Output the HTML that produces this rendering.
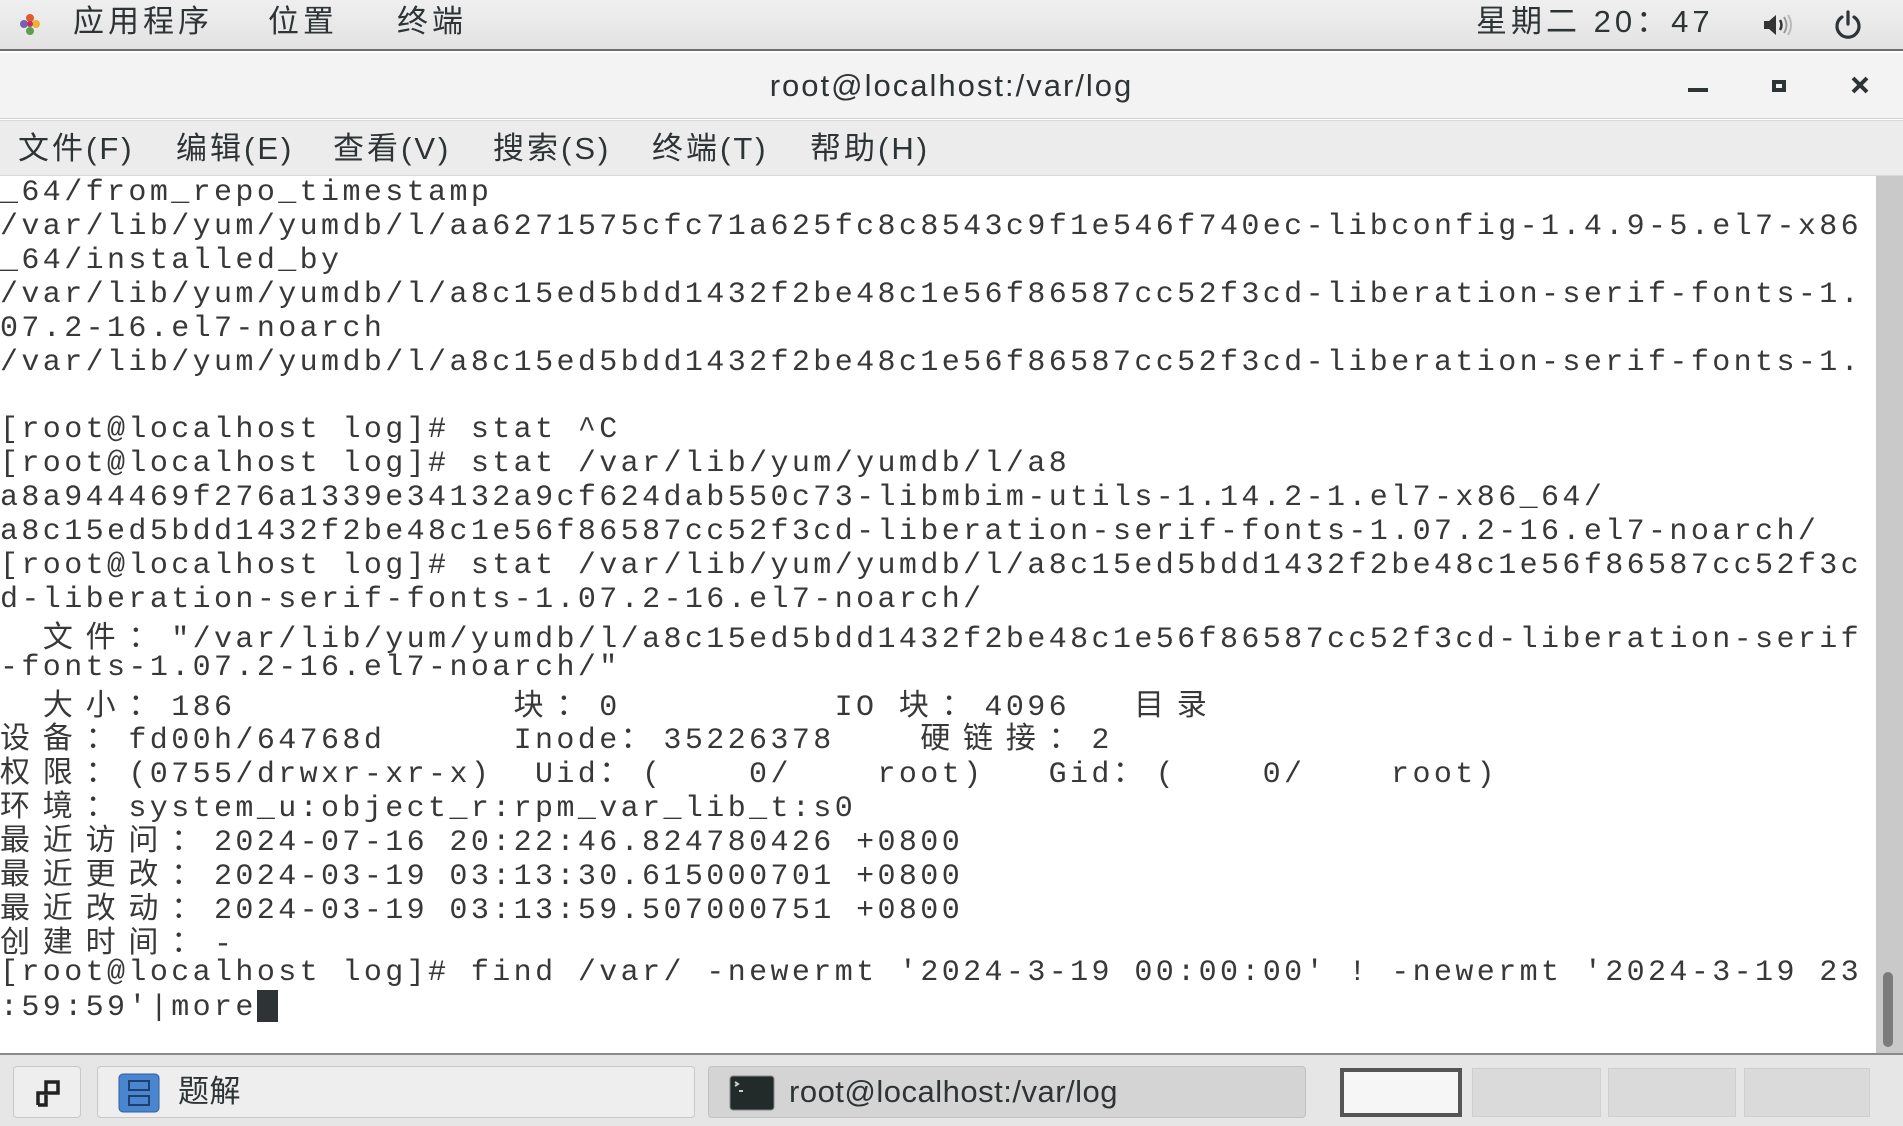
<!DOCTYPE html>
<html><head><meta charset="utf-8"><style>
*{margin:0;padding:0;box-sizing:border-box}
body{width:1903px;height:1126px;overflow:hidden;background:#fff;font-family:"Liberation Sans","Noto Sans CJK SC",sans-serif;color:#2e3436;position:relative}
#top{position:absolute;left:0;top:0;width:1903px;height:51px;background:linear-gradient(#efefef,#e3e3e3);border-bottom:2px solid #6d6d6d}
#top span{position:absolute;top:3px;font-size:31px;line-height:37px;letter-spacing:4px;color:#2e3436}
#title{position:absolute;left:0;top:53px;width:1903px;height:66px;background:#f3f3f3;border-bottom:1px solid #cfcfcf}
#title .t{position:absolute;left:0;width:1903px;text-align:center;top:14px;font-size:31px;line-height:37px;letter-spacing:2px;color:#2e3436}
#menu{position:absolute;left:0;top:120px;width:1903px;height:56px;background:#ececec;border-top:1px solid #d8d8d8;border-bottom:1px solid #d8d8d8}
#menu span{position:absolute;top:9px;font-size:31px;line-height:37px;letter-spacing:3px;color:#2e3436}
#term{position:absolute;left:0;top:176px;width:1876px;height:877px;background:#fff;overflow:hidden}
.l{position:absolute;left:0;height:34px;line-height:34px;white-space:pre;font-family:"Liberation Mono","Noto Sans CJK SC",monospace;font-size:30px;letter-spacing:3.4px;color:#383838}
.l span{position:absolute;top:0}
.k{letter-spacing:12.8px;font-family:"Noto Sans CJK SC",sans-serif;font-weight:normal}
#sb{position:absolute;left:1876px;top:176px;width:27px;height:877px;background:#c9c9c9}
#thumb{position:absolute;left:1883px;top:972px;width:10px;height:75px;background:#7b7b7b;border-radius:5px}
#task{position:absolute;left:0;top:1053px;width:1903px;height:73px;background:#e6e6e6;border-top:2px solid #8a8a8a}
.b{position:absolute;top:1066px;height:52px;border:1px solid #c8c8c8;border-radius:4px;background:#eeeeee}
.b span{position:absolute;left:80px;top:6px;font-size:31px;line-height:37px;letter-spacing:0.5px}
.ws{position:absolute;top:1068px;height:49px;background:#dadada;border:1px solid #cfcfcf}
</style></head><body>
<div id="top">
<svg style="position:absolute;left:18px;top:12px" width="24" height="26" viewBox="0 0 24 26"><circle cx="12" cy="6" r="4" fill="#e05a2a"/><circle cx="6" cy="12" r="4" fill="#7a5fb0"/><circle cx="18" cy="12" r="4" fill="#f0b030"/><circle cx="12" cy="19" r="4" fill="#5aa04a"/><circle cx="12" cy="12" r="3" fill="#c03070"/></svg>
<span style="left:73px">应用程序</span><span style="left:268px">位置</span><span style="left:397px">终端</span>
<span style="left:1476px">星期二 20：47</span>
<svg style="position:absolute;left:1762px;top:12px" width="34" height="26" viewBox="0 0 34 26"><path d="M2 9h5l7-6v20l-7-6H2z" fill="#333"/><path d="M18 8q3 5 0 10" stroke="#333" stroke-width="2.5" fill="none"/><path d="M22 5q5 8 0 16" stroke="#999" stroke-width="2" fill="none"/><path d="M26 3q6 10 0 20" stroke="#bbb" stroke-width="2" fill="none"/></svg>
<svg style="position:absolute;left:1832px;top:9px" width="32" height="32" viewBox="0 0 32 32"><path d="M10 8a11 11 0 1 0 12 0" stroke="#2e3436" stroke-width="3.2" fill="none" stroke-linecap="round"/><path d="M16 3v12" stroke="#2e3436" stroke-width="3.2" stroke-linecap="round"/></svg>
</div>
<div id="title"><div class="t">root@localhost:/var/log</div>
<div style="position:absolute;left:1688px;top:35px;width:20px;height:4px;background:#2e3436"></div>
<div style="position:absolute;left:1772px;top:27px;width:14px;height:12px;border:4px solid #2e3436"></div>
<svg style="position:absolute;left:1850px;top:22px" width="20" height="20" viewBox="0 0 20 20"><path d="M3 3l14 14M17 3L3 17" stroke="#2e3436" stroke-width="4"/></svg>
</div>
<div id="menu"><span style="left:18px">文件(F)</span><span style="left:176px">编辑(E)</span><span style="left:333px">查看(V)</span><span style="left:493px">搜索(S)</span><span style="left:652px">终端(T)</span><span style="left:810px">帮助(H)</span></div>
<div id="term">
<div class="l" style="top:0px">_64/from_repo_timestamp</div>
<div class="l" style="top:33.9px">/var/lib/yum/yumdb/l/aa6271575cfc71a625fc8c8543c9f1e546f740ec-libconfig-1.4.9-5.el7-x86</div>
<div class="l" style="top:67.8px">_64/installed_by</div>
<div class="l" style="top:101.7px">/var/lib/yum/yumdb/l/a8c15ed5bdd1432f2be48c1e56f86587cc52f3cd-liberation-serif-fonts-1.</div>
<div class="l" style="top:135.6px">07.2-16.el7-noarch</div>
<div class="l" style="top:169.5px">/var/lib/yum/yumdb/l/a8c15ed5bdd1432f2be48c1e56f86587cc52f3cd-liberation-serif-fonts-1.</div>
<div class="l" style="top:237.3px">[root@localhost log]# stat ^C</div>
<div class="l" style="top:271.2px">[root@localhost log]# stat /var/lib/yum/yumdb/l/a8</div>
<div class="l" style="top:305.1px">a8a944469f276a1339e34132a9cf624dab550c73-libmbim-utils-1.14.2-1.el7-x86_64/</div>
<div class="l" style="top:339px">a8c15ed5bdd1432f2be48c1e56f86587cc52f3cd-liberation-serif-fonts-1.07.2-16.el7-noarch/</div>
<div class="l" style="top:372.9px">[root@localhost log]# stat /var/lib/yum/yumdb/l/a8c15ed5bdd1432f2be48c1e56f86587cc52f3c</div>
<div class="l" style="top:406.8px">d-liberation-serif-fonts-1.07.2-16.el7-noarch/</div>
<div class="l" style="top:440.7px">  <b class="k">文件：</b>"/var/lib/yum/yumdb/l/a8c15ed5bdd1432f2be48c1e56f86587cc52f3cd-liberation-serif</div>
<div class="l" style="top:474.6px">-fonts-1.07.2-16.el7-noarch/"</div>
<div class="l" style="top:508.5px;width:1876px"><span style="left:0">  <b class="k">大小：</b>186</span><span style="left:513.6px"><b class="k">块：</b>0</span><span style="left:834.6px">IO <b class="k">块：</b>4096</span><span style="left:1134px"><b class="k">目录</b></span></div>
<div class="l" style="top:542.4px;width:1876px"><span style="left:0"><b class="k">设备：</b>fd00h/64768d</span><span style="left:513.6px">Inode<b class="k">：</b>35226378</span><span style="left:920.2px"><b class="k">硬链接：</b>2</span></div>
<div class="l" style="top:576.3px;width:1876px"><span style="left:0"><b class="k">权限：</b>(0755/drwxr-xr-x)</span><span style="left:535px">Uid<b class="k">：</b>(    0/    root)</span><span style="left:1048.6px">Gid<b class="k">：</b>(    0/    root)</span></div>
<div class="l" style="top:610.2px"><b class="k">环境：</b>system_u:object_r:rpm_var_lib_t:s0</div>
<div class="l" style="top:644.1px"><b class="k">最近访问：</b>2024-07-16 20:22:46.824780426 +0800</div>
<div class="l" style="top:678px"><b class="k">最近更改：</b>2024-03-19 03:13:30.615000701 +0800</div>
<div class="l" style="top:711.9px"><b class="k">最近改动：</b>2024-03-19 03:13:59.507000751 +0800</div>
<div class="l" style="top:745.8px"><b class="k">创建时间：</b>-</div>
<div class="l" style="top:779.7px">[root@localhost log]# find /var/ -newermt '2024-3-19 00:00:00' ! -newermt '2024-3-19 23</div>
<div class="l" style="top:813.6px">:59:59'|more<i style="display:inline-block;width:21px;height:32px;background:#2e3436;vertical-align:-7px"></i></div>
</div>
<div id="sb"></div><div id="thumb"></div>
<div id="task"></div>
<div class="b" style="left:13px;width:68px"><svg style="position:absolute;left:20px;top:12px" width="28" height="28" viewBox="0 0 28 28"><rect x="12" y="3" width="12" height="11" fill="none" stroke="#222" stroke-width="3.5"/><path d="M4 26V14h8M4 26h8V16" stroke="#222" stroke-width="3.5" fill="none"/></svg></div>
<div class="b" style="left:97px;width:598px"><svg style="position:absolute;left:20px;top:6px" width="42" height="40" viewBox="0 0 42 40"><rect x="1" y="1" width="40" height="38" rx="4" fill="#4a86d0" stroke="#2f5f9e"/><rect x="11" y="8" width="20" height="9" fill="none" stroke="#1f3f6e" stroke-width="2"/><rect x="11" y="23" width="20" height="9" fill="none" stroke="#1f3f6e" stroke-width="2"/></svg><span>题解</span></div>
<div class="b" style="left:708px;width:598px;background:#d4d4d4;border-color:#c0c0c0"><svg style="position:absolute;left:20px;top:8px" width="46" height="36" viewBox="0 0 46 36"><rect x="1" y="1" width="44" height="34" rx="3" fill="#222a2a" stroke="#888"/><path d="M6 7l3 2-3 2M10 16h4" stroke="#ccc" stroke-width="2" fill="none"/></svg><span>root@localhost:/var/log</span></div>
<div class="ws" style="left:1340px;width:122px;background:#f6f6f6;border:4px solid #555"></div>
<div class="ws" style="left:1472px;width:129px"></div>
<div class="ws" style="left:1608px;width:128px"></div>
<div class="ws" style="left:1744px;width:126px"></div>
</body></html>
